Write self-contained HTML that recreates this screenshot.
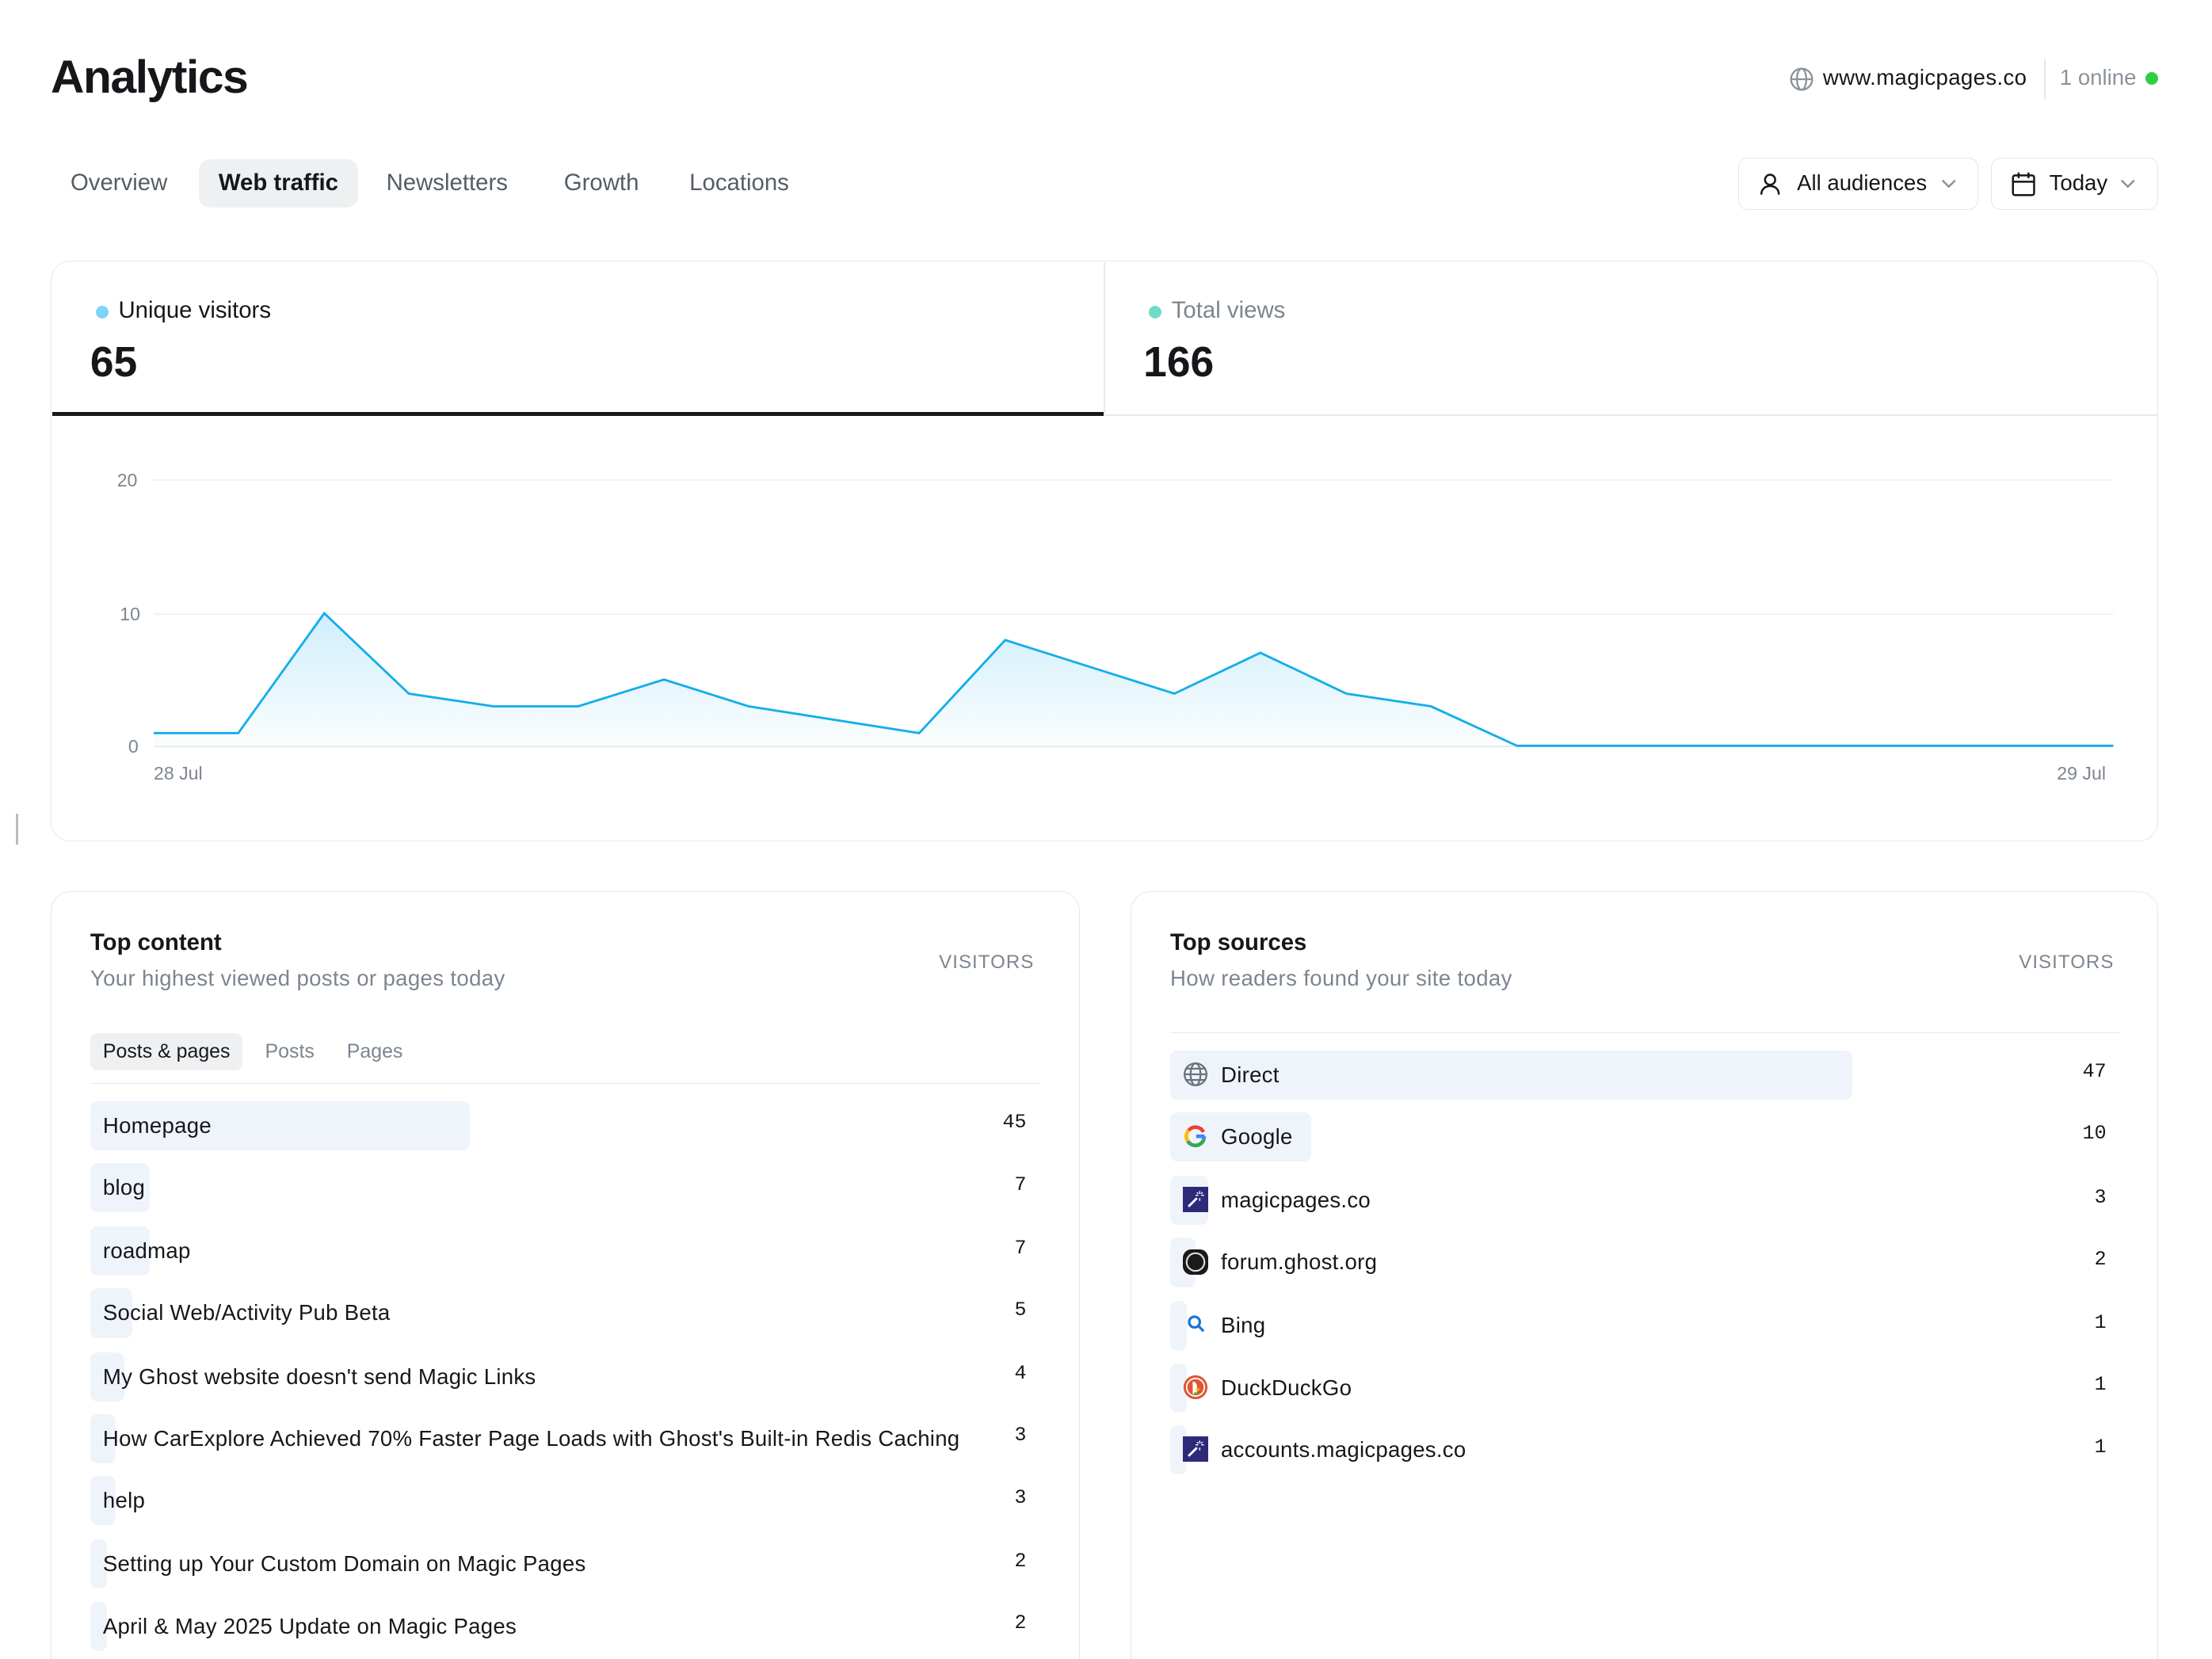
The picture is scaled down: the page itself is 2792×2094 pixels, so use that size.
<!DOCTYPE html>
<html><head><meta charset="utf-8"><style>
*{box-sizing:border-box;margin:0;padding:0}
html,body{background:#fff;overflow:hidden}
body{width:2792px;height:2094px}
#w{zoom:1.7795;width:1569px;height:1177px;position:relative;overflow:hidden;font-family:"Liberation Sans",sans-serif;color:#15171a}
.a{position:absolute}
h1{position:absolute;left:36px;top:36px;font-size:33px;font-weight:700;letter-spacing:-0.8px}
.tab{position:absolute;top:113px;height:34px;line-height:34px;font-size:16.5px;color:#545d66;padding:0 14px}
.tab.on{background:#eff0f1;color:#15171a;font-weight:700;border-radius:8px}
.btn{position:absolute;top:112px;height:37px;border:1px solid #e4e6e8;border-radius:7px;font-size:15.5px;line-height:35px}
.card{position:absolute;border:1px solid #e6e8ea;border-radius:14px;background:#fff}
.lbl{font-size:16.5px}
.num{font-size:30px;font-weight:700}
.ax{font-size:13px;color:#7c8590}
.row{position:absolute;height:35px;border-radius:5px;background:#eff4fb}
.rt{position:absolute;font-size:15.5px;letter-spacing:0.15px;line-height:35px;white-space:nowrap}
.rn{position:absolute;font-family:"Liberation Mono",monospace;font-size:14px;line-height:35px;text-align:right;width:40px}
.sub{font-size:15.5px;color:#7c8590;letter-spacing:0.2px}
.vis{font-size:13.5px;color:#7c8590;letter-spacing:0.6px}
</style></head><body><div id="w">
<h1>Analytics</h1>
<svg class="a" style="left:1269px;top:47px" width="18" height="18" viewBox="0 0 18 18" fill="none" stroke="#8a929b" stroke-width="1.3"><circle cx="9" cy="9" r="7.5"/><ellipse cx="9" cy="9" rx="3.3" ry="7.5"/><path d="M1.5 9h15"/></svg>
<div class="a" style="left:1293px;top:46px;font-size:15.5px;letter-spacing:0.2px">www.magicpages.co</div>
<div class="a" style="left:1450px;top:42px;width:1px;height:28px;background:#e4e6e8"></div>
<div class="a" style="left:1461px;top:46px;font-size:15.5px;color:#8a929b">1 online</div>
<div class="a" style="left:1522px;top:51px;width:9px;height:9px;border-radius:50%;background:#30cf43"></div>

<div class="tab" style="left:36px">Overview</div>
<div class="tab on" style="left:141px">Web traffic</div>
<div class="tab" style="left:260px">Newsletters</div>
<div class="tab" style="left:386px">Growth</div>
<div class="tab" style="left:475px">Locations</div>

<div class="btn" style="left:1233px;width:170px">
<svg class="a" style="left:14px;top:10px" width="16" height="16" viewBox="0 0 16 16" fill="none" stroke="#15171a" stroke-width="1.4"><circle cx="8" cy="5" r="3.6"/><path d="M1.8 15.5c0-4 2.8-6 6.2-6s6.2 2 6.2 6"/></svg>
<span class="a" style="left:41px">All audiences</span>
<svg class="a" style="left:143px;top:14px" width="11" height="8" viewBox="0 0 11 8" fill="none" stroke="#8a929b" stroke-width="1.4"><path d="M1 1.5l4.5 4.5 4.5-4.5"/></svg></div>
<div class="btn" style="left:1412px;width:119px">
<svg class="a" style="left:14px;top:9px" width="17" height="18" viewBox="0 0 17 18" fill="none" stroke="#15171a" stroke-width="1.4"><rect x="1" y="3" width="15" height="14" rx="1.5"/><path d="M1 7.5h15M5 1v4M12 1v4"/></svg>
<span class="a" style="left:41px">Today</span>
<svg class="a" style="left:91px;top:14px" width="11" height="8" viewBox="0 0 11 8" fill="none" stroke="#8a929b" stroke-width="1.4"><path d="M1 1.5l4.5 4.5 4.5-4.5"/></svg></div>

<div class="card" style="left:36px;top:185px;width:1495px;height:412px"></div>
<div class="a" style="left:783px;top:186px;width:1px;height:109px;background:#e6e8ea"></div>
<div class="a" style="left:783px;top:294px;width:747px;height:1px;background:#e6e8ea"></div>
<div class="a" style="left:37px;top:292px;width:746px;height:3px;background:#15171a"></div>
<div class="a" style="left:68px;top:217px;width:9px;height:9px;border-radius:50%;background:#7dd3fc"></div>
<div class="a lbl" style="left:84px;top:211px">Unique visitors</div>
<div class="a num" style="left:64px;top:240px">65</div>
<div class="a" style="left:815px;top:217px;width:9px;height:9px;border-radius:50%;background:#6fdcc6"></div>
<div class="a lbl" style="left:831px;top:211px;color:#7c8590">Total views</div>
<div class="a num" style="left:811px;top:240px">166</div>

<div class="a ax" style="left:83px;top:333px">20</div>
<div class="a ax" style="left:85px;top:428px">10</div>
<div class="a ax" style="left:91px;top:522px">0</div>
<div class="a ax" style="left:109px;top:541px">28 Jul</div>
<div class="a ax" style="left:1459px;top:541px">29 Jul</div>
<svg class="a" style="left:0;top:0" width="1562" height="600">
<defs><linearGradient id="g" x1="0" y1="0" x2="0" y2="1"><stop offset="0" stop-color="#2ab4ef" stop-opacity="0.22"/><stop offset="1" stop-color="#2ab4ef" stop-opacity="0.02"/></linearGradient></defs>
<path d="M109 340.5H1499M109 435.5H1499" stroke="#f0f1f3" stroke-width="1"/>
<path d="M109 529.5H1499" stroke="#e6e8ea"/>
<path d="M109 520L169 520L230 435L290 492L350 501L410 501L471 482L531 501L652 520L713 454L833 492L894 463L955 492L1015 501L1076 529L1499 529L1499 529L109 529Z" fill="url(#g)"/>
<path d="M109 520L169 520L230 435L290 492L350 501L410 501L471 482L531 501L652 520L713 454L833 492L894 463L955 492L1015 501L1076 529L1499 529" fill="none" stroke="#14aee9" stroke-width="1.6"/>
</svg>
<div class="a" style="left:11px;top:577px;width:2px;height:22px;background:#bbb"></div>

<div class="card" style="left:36px;top:632px;width:730px;height:600px"></div>
<div class="a" style="left:64px;top:659px;font-size:16.5px;font-weight:700">Top content</div>
<div class="a sub" style="left:64px;top:685px">Your highest viewed posts or pages today</div>
<div class="a vis" style="left:666px;top:675px">VISITORS</div>
<div class="a" style="left:64px;top:733px;height:26px;line-height:26px;padding:0 9px;background:#eff0f1;border-radius:5px;font-size:14px">Posts &amp; pages</div>
<div class="a" style="left:188px;top:733px;line-height:26px;font-size:14px;color:#7c8590">Posts</div>
<div class="a" style="left:246px;top:733px;line-height:26px;font-size:14px;color:#7c8590">Pages</div>
<div class="a" style="left:64px;top:768px;width:674px;height:1px;background:#e6e8ea"></div>

<div class="card" style="left:802px;top:632px;width:729px;height:600px"></div>
<div class="a" style="left:830px;top:659px;font-size:16.5px;font-weight:700">Top sources</div>
<div class="a sub" style="left:830px;top:685px">How readers found your site today</div>
<div class="a vis" style="left:1432px;top:675px">VISITORS</div>
<div class="a" style="left:830px;top:732px;width:674px;height:1px;background:#e6e8ea"></div>

<!-- content rows -->
<div class="row" style="left:64px;top:781px;width:269px"></div><div class="rt" style="left:73px;top:781px">Homepage</div><div class="rn" style="left:688px;top:779px">45</div>
<div class="row" style="left:64px;top:825px;width:42px"></div><div class="rt" style="left:73px;top:825px">blog</div><div class="rn" style="left:688px;top:823px">7</div>
<div class="row" style="left:64px;top:870px;width:42px"></div><div class="rt" style="left:73px;top:870px">roadmap</div><div class="rn" style="left:688px;top:868px">7</div>
<div class="row" style="left:64px;top:914px;width:30px"></div><div class="rt" style="left:73px;top:914px">Social Web/Activity Pub Beta</div><div class="rn" style="left:688px;top:912px">5</div>
<div class="row" style="left:64px;top:959px;width:24px"></div><div class="rt" style="left:73px;top:959px">My Ghost website doesn't send Magic Links</div><div class="rn" style="left:688px;top:957px">4</div>
<div class="row" style="left:64px;top:1003px;width:18px"></div><div class="rt" style="left:73px;top:1003px">How CarExplore Achieved 70% Faster Page Loads with Ghost's Built-in Redis Caching</div><div class="rn" style="left:688px;top:1001px">3</div>
<div class="row" style="left:64px;top:1047px;width:18px"></div><div class="rt" style="left:73px;top:1047px">help</div><div class="rn" style="left:688px;top:1045px">3</div>
<div class="row" style="left:64px;top:1092px;width:12px"></div><div class="rt" style="left:73px;top:1092px">Setting up Your Custom Domain on Magic Pages</div><div class="rn" style="left:688px;top:1090px">2</div>
<div class="row" style="left:64px;top:1136px;width:12px"></div><div class="rt" style="left:73px;top:1136px">April &amp; May 2025 Update on Magic Pages</div><div class="rn" style="left:688px;top:1134px">2</div>

<!-- source rows -->
<div class="row" style="left:830px;top:745px;width:484px"></div>
<svg class="a" style="left:839px;top:753px" width="18" height="18" viewBox="0 0 18 18" fill="none" stroke="#6b737c" stroke-width="1.3"><circle cx="9" cy="9" r="7.8"/><ellipse cx="9" cy="9" rx="3.5" ry="7.8"/><path d="M1.2 9h15.6M2.5 5h13M2.5 13h13"/></svg>
<div class="rt" style="left:866px;top:745px">Direct</div><div class="rn" style="left:1454px;top:743px">47</div>

<div class="row" style="left:830px;top:789px;width:100px"></div>
<svg class="a" style="left:840px;top:798px" width="16" height="16" viewBox="0 0 16 16" fill="none" stroke-width="2.6"><path d="M13.5 5A6.3 6.3 0 0 0 3 3.8" stroke="#ea4335"/><path d="M3 3.8A6.3 6.3 0 0 0 2.4 11.5" stroke="#fbbc05"/><path d="M2.4 11.5A6.3 6.3 0 0 0 13.8 10" stroke="#34a853"/><path d="M14.2 8H8.3" stroke="#4285f4"/><path d="M14 8a6 6 0 0 1-0.3 2" stroke="#4285f4"/></svg>
<div class="rt" style="left:866px;top:789px">Google</div><div class="rn" style="left:1454px;top:787px">10</div>

<div class="row" style="left:830px;top:834px;width:27px"></div>
<svg class="a" style="left:839px;top:842px" width="18" height="18" viewBox="0 0 18 18"><rect width="18" height="18" fill="#2e2a7a"/><path d="M4 14L10 8" stroke="#fff" stroke-width="1.6"/><path d="M12 3v2M12 8v2M9 6h2M13 6h2M10 4l1 1M14 4l-1 1" stroke="#fff" stroke-width="0.8"/></svg>
<div class="rt" style="left:866px;top:834px">magicpages.co</div><div class="rn" style="left:1454px;top:832px">3</div>

<div class="row" style="left:830px;top:878px;width:18px"></div>
<svg class="a" style="left:839px;top:886px" width="18" height="18" viewBox="0 0 18 18"><rect width="18" height="18" rx="6" fill="#1a1a1a"/><circle cx="9" cy="9" r="6.3" fill="none" stroke="#ddd" stroke-width="1.2"/></svg>
<div class="rt" style="left:866px;top:878px">forum.ghost.org</div><div class="rn" style="left:1454px;top:876px">2</div>

<div class="row" style="left:830px;top:923px;width:12px"></div>
<svg class="a" style="left:841px;top:932px" width="14" height="14" viewBox="0 0 14 14" fill="none" stroke="#1976d2" stroke-width="1.8"><circle cx="6" cy="6" r="3.8"/><path d="M8.8 8.8L12.5 12.5"/></svg>
<div class="rt" style="left:866px;top:923px">Bing</div><div class="rn" style="left:1454px;top:921px">1</div>

<div class="row" style="left:830px;top:967px;width:12px"></div>
<svg class="a" style="left:839px;top:975px" width="18" height="18" viewBox="0 0 18 18"><circle cx="9" cy="9" r="8.5" fill="#de5833"/><circle cx="9" cy="9" r="6.8" fill="#fff"/><circle cx="9" cy="9" r="5.8" fill="#de5833"/><path d="M7 5c2 0 3 1.5 3 3.5v5.3h-3z" fill="#fff"/><path d="M9 10h3l-1 1.5h-2z" fill="#fdd209"/><path d="M8 12.5h2v2h-2z" fill="#4cba3c"/></svg>
<div class="rt" style="left:866px;top:967px">DuckDuckGo</div><div class="rn" style="left:1454px;top:965px">1</div>

<div class="row" style="left:830px;top:1011px;width:12px"></div>
<svg class="a" style="left:839px;top:1019px" width="18" height="18" viewBox="0 0 18 18"><rect width="18" height="18" fill="#2e2a7a"/><path d="M4 14L10 8" stroke="#fff" stroke-width="1.6"/><path d="M12 3v2M12 8v2M9 6h2M13 6h2M10 4l1 1M14 4l-1 1" stroke="#fff" stroke-width="0.8"/></svg>
<div class="rt" style="left:866px;top:1011px">accounts.magicpages.co</div><div class="rn" style="left:1454px;top:1009px">1</div>
</div></body></html>
